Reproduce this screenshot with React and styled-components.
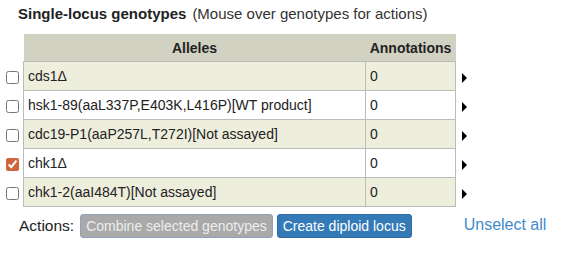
import styled, { createGlobalStyle } from 'styled-components';
import React, { useState } from 'react';

const GlobalStyle = createGlobalStyle`
    body {
        margin: 0;
        background: white;
        font-family: "Liberation Sans", Arial, sans-serif;
        color: #222;
    }
`

const Page = styled.div`
    padding-top: 4px;
`

const Heading = styled.div`
    margin-left: 18px;
    font-size: 15px;
    line-height: 20px;
    display: flex;
    gap: 6px;
`

const Title = styled.span`
    font-weight: bold;
`

const Hint = styled.span`
    color: #333;
`

const Table = styled.table`
    margin-top: 10px;
    border-collapse: collapse;
    font-size: 14px;
    line-height: 20px;
`

const HeadCell = styled.th`
    background-color: ${props => props.$blank ? 'transparent' : '#d2d2c2'};
    font-weight: bold;
    color: #222;
    height: 27px;
    padding: 0 4px;
    text-align: center;
`

const Row = styled.tr`
    background-color: ${props => props.$odd ? '#eeeedd' : 'white'};
`

const Cell = styled.td`
    border: 1px solid #bbb;
    padding: 4px 4px;
    color: #222;
    width: ${props => props.$width}px;
    box-sizing: border-box;
`

const SideCell = styled.td`
    background: white;
    padding: 0;
    width: ${props => props.$width}px;
    vertical-align: middle;
`

const Check = styled.input`
    display: block;
    margin: 2px 0 0 6px;
    width: 13px;
    height: 13px;
    accent-color: #d0643a;
`

const Arrow = styled.div`
    margin: 3px 0 0 6px;
    width: 0;
    height: 0;
    border-left: 5px solid black;
    border-top: 5px solid transparent;
    border-bottom: 5px solid transparent;
`

const Actions = styled.div`
    margin: 7px 0 0 19px;
    display: flex;
    align-items: center;
`

const Label = styled.span`
    font-size: 15.5px;
    margin-right: 6px;
`

const Button = styled.button`
    font-family: inherit;
    font-size: 14px;
    line-height: 20px;
    padding: 1px 5px;
    border-radius: 3px;
    margin-right: 4px;
    border: 1px solid ${props => props.$primary ? '#2e6da4' : '#8ea2bb'};
    background-color: ${props => props.$primary ? '#337ab7' : '#a9a9a9'};
    color: ${props => props.$primary ? 'white' : '#eeeeee'};
`

const Link = styled.a`
    margin-left: 48px;
    margin-top: -2px;
    font-size: 16px;
    color: #428bca;
    text-decoration: none;
`

const genotypes = [
    { name: 'cds1Δ', annotations: 0 },
    { name: 'hsk1-89(aaL337P,E403K,L416P)[WT product]', annotations: 0 },
    { name: 'cdc19-P1(aaP257L,T272I)[Not assayed]', annotations: 0 },
    { name: 'chk1Δ', annotations: 0 },
    { name: 'chk1-2(aaI484T)[Not assayed]', annotations: 0 },
]

function App() {
    const [selected, setSelected] = useState([3])

    function toggle(index) {
        if (selected.includes(index)) setSelected(selected.filter(i => i !== index))
        else setSelected([...selected, index])
    }

    return (
        <>
            <GlobalStyle />
            <Page>
                <Heading>
                    <Title>Single-locus genotypes</Title>
                    <Hint>(Mouse over genotypes for actions)</Hint>
                </Heading>
                <Table>
                    <thead>
                        <tr>
                            <HeadCell $blank />
                            <HeadCell>Alleles</HeadCell>
                            <HeadCell>Annotations</HeadCell>
                            <HeadCell $blank />
                        </tr>
                    </thead>
                    <tbody>
                        {genotypes.map((g, index) => (
                            <Row key={index} $odd={index % 2 === 0}>
                                <SideCell $width={23}>
                                    <Check type="checkbox" checked={selected.includes(index)} onChange={() => toggle(index)} />
                                </SideCell>
                                <Cell $width={342}>{g.name}</Cell>
                                <Cell $width={90}>{g.annotations}</Cell>
                                <SideCell $width={20}>
                                    <Arrow />
                                </SideCell>
                            </Row>
                        ))}
                    </tbody>
                </Table>
                <Actions>
                    <Label>Actions:</Label>
                    <Button disabled={selected.length < 2}>Combine selected genotypes</Button>
                    <Button $primary>Create diploid locus</Button>
                    <Link href="#" onClick={e => { e.preventDefault(); setSelected([]) }}>Unselect all</Link>
                </Actions>
            </Page>
        </>
    )
}

export default App;
